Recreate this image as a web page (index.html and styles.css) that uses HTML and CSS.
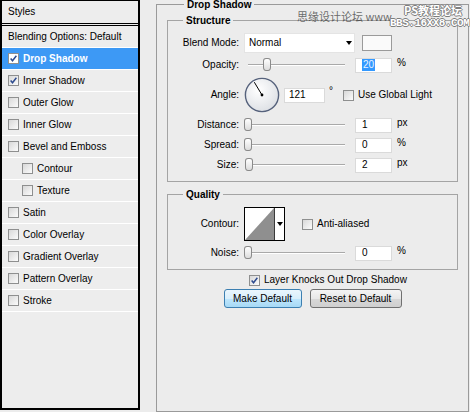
FILE: index.html
```html
<!DOCTYPE html>
<html lang="en">
  <head>
    <meta charset="utf-8" />
    <title>Layer Style - Drop Shadow</title>
    <link rel="stylesheet" href="styles.css">
  </head>

  <body>
    <!-- left column: list of layer effects -->
    <div class="styles-list">
      <div class="list-head">Styles</div>
      <div class="list-item">Blending Options: Default</div>
      <div class="list-item selected">
        <span class="cb on"><svg viewBox="0 0 11 11"><path d="M2 5.5 L4.3 8.3 L9 2.2" /></svg></span>Drop Shadow
      </div>
      <div class="list-item">
        <span class="cb on"><svg viewBox="0 0 11 11"><path d="M2 5.5 L4.3 8.3 L9 2.2" /></svg></span>Inner Shadow
      </div>
      <div class="list-item"><span class="cb"></span>Outer Glow</div>
      <div class="list-item"><span class="cb"></span>Inner Glow</div>
      <div class="list-item"><span class="cb"></span>Bevel and Emboss</div>
      <div class="list-item sub"><span class="cb"></span>Contour</div>
      <div class="list-item sub"><span class="cb"></span>Texture</div>
      <div class="list-item"><span class="cb"></span>Satin</div>
      <div class="list-item"><span class="cb"></span>Color Overlay</div>
      <div class="list-item"><span class="cb"></span>Gradient Overlay</div>
      <div class="list-item"><span class="cb"></span>Pattern Overlay</div>
      <div class="list-item"><span class="cb"></span>Stroke</div>
    </div>

    <fieldset class="panel">
      <legend>Drop Shadow</legend>

      <fieldset class="group structure">
        <legend>Structure</legend>

        <div class="field">
          <span class="label">Blend Mode:</span>
          <div class="control">
            <div class="select">Normal<span class="caret"></span></div>
            <div class="swatch"></div>
          </div>
        </div>

        <div class="field slim">
          <span class="label">Opacity:</span>
          <div class="control">
            <div class="slider"><span class="thumb" style="left: 20%"></span></div>
            <div class="num"><span class="sel">20</span></div>
            <span class="unit">%</span>
          </div>
        </div>

        <div class="field angle">
          <span class="label">Angle:</span>
          <div class="control">
            <svg class="dial" viewBox="0 0 36 36">
              <defs>
                <radialGradient id="dialfill" cx="40%" cy="35%" r="70%">
                  <stop offset="0" stop-color="#ffffff" />
                  <stop offset="1" stop-color="#dcdfe4" />
                </radialGradient>
              </defs>
              <circle cx="18" cy="18" r="16.6" fill="url(#dialfill)" stroke="#56627c" stroke-width="1.4" />
              <line x1="18" y1="18" x2="10.3" y2="5.2" stroke="#000" stroke-width="1" />
              <circle cx="18" cy="18" r="1.4" fill="#000" />
            </svg>
            <div class="num wide">121</div>
            <span class="deg">°</span>
            <span class="check global"><span class="cb"></span>Use Global Light</span>
          </div>
        </div>

        <div class="field slim">
          <span class="label">Distance:</span>
          <div class="control">
            <div class="slider"><span class="thumb" style="left: 0.4%"></span></div>
            <div class="num">1</div>
            <span class="unit">px</span>
          </div>
        </div>

        <div class="field slim">
          <span class="label">Spread:</span>
          <div class="control">
            <div class="slider"><span class="thumb" style="left: 0%"></span></div>
            <div class="num">0</div>
            <span class="unit">%</span>
          </div>
        </div>

        <div class="field slim">
          <span class="label">Size:</span>
          <div class="control">
            <div class="slider"><span class="thumb" style="left: 0.8%"></span></div>
            <div class="num">2</div>
            <span class="unit">px</span>
          </div>
        </div>
      </fieldset>

      <fieldset class="group quality">
        <legend>Quality</legend>

        <div class="field">
          <span class="label">Contour:</span>
          <div class="control">
            <div class="contour">
              <svg class="curve" viewBox="0 0 29 32" preserveAspectRatio="none">
                <polygon points="0,32 29,0 29,32" fill="#8f8f8f" />
              </svg>
              <span class="contour-arrow"><span class="caret"></span></span>
            </div>
            <span class="check anti"><span class="cb"></span>Anti-aliased</span>
          </div>
        </div>

        <div class="field slim">
          <span class="label">Noise:</span>
          <div class="control">
            <div class="slider"><span class="thumb" style="left: 0%"></span></div>
            <div class="num">0</div>
            <span class="unit">%</span>
          </div>
        </div>
      </fieldset>

      <div class="check knock">
        <span class="cb on"><svg viewBox="0 0 11 11"><path d="M2 5.5 L4.3 8.3 L9 2.2" /></svg></span>Layer Knocks Out Drop Shadow
      </div>

      <div class="buttons">
        <button class="btn default">Make Default</button>
        <button class="btn">Reset to Default</button>
      </div>
    </fieldset>

    <!-- forum watermark over the top right corner -->
    <div class="wm-site">思缘设计论坛 www.</div>
    <div class="wm-logo">
      <div class="wm-title">PS教程论坛</div>
      <div class="wm-url">BBS.16XX8.COM</div>
    </div>
  </body>
</html>
```

FILE: styles.css
```css
body {
  margin: 0;
  height: 412px;
  overflow: hidden;
  display: flex;
  position: relative;
  background: #ececec;
  font-family: "Liberation Sans", Arial, sans-serif;
  font-size: 10px;
  line-height: 12px;
  color: #000;
}

/* ---------- styles list ---------- */
.styles-list {
  box-sizing: border-box;
  width: 140px;
  height: 410px;
  margin-right: 16px;
  border: 2px solid #000;
  border-top-width: 1px;
  background: #ededed;
}
.list-head {
  height: 22px;
  padding-left: 6px;
  display: flex;
  align-items: center;
  border-bottom: 3px double #000;
}
.list-item {
  height: 21px;
  padding-left: 6px;
  display: flex;
  align-items: center;
  gap: 4px;
  border-bottom: 1px solid #fff;
}
.list-item.sub {
  padding-left: 20px;
}
.list-item.selected {
  background: #3d99f5;
  color: #fff;
  font-weight: bold;
}

.cb {
  box-sizing: border-box;
  width: 11px;
  height: 11px;
  flex: none;
  border: 1px solid #8e8f8f;
  background: linear-gradient(135deg, #d8d8d8, #fbfbfb);
  display: inline-flex;
}
.cb svg {
  width: 9px;
  height: 9px;
}
.cb path {
  fill: none;
  stroke: #2c4a8e;
  stroke-width: 1.8;
}
.selected .cb {
  background: #fff;
}

/* ---------- right panel ---------- */
.panel {
  box-sizing: border-box;
  width: 313px;
  height: 412px;
  margin: 0;
  padding: 7px 10px 0;
  min-inline-size: 0;
  border: 1px solid #9a9a9a;
}
legend {
  margin-left: 17px;
  padding: 0 3px;
  font-weight: bold;
  line-height: 9px;
}
.group {
  margin: 0;
  padding: 8px 0 8px;
  min-inline-size: 0;
  border: 1px solid #a4a4a4;
}
.group legend {
  margin-left: 15px;
}
.quality {
  margin-top: 8px;
}

.field {
  display: grid;
  grid-template-columns: 71px auto;
  column-gap: 5px;
  align-items: center;
  min-height: 20px;
}
.field + .field {
  margin-top: 4px;
}
.field.slim {
  min-height: 16px;
}
.label {
  text-align: right;
}
.control {
  display: flex;
  align-items: center;
}

.select {
  box-sizing: border-box;
  width: 111px;
  height: 20px;
  padding-left: 4px;
  display: flex;
  align-items: center;
  justify-content: space-between;
  background: #fff;
  border: 1px solid #e4e4e4;
}
.caret {
  width: 0;
  height: 0;
  margin-right: 2px;
  border-left: 3px solid transparent;
  border-right: 3px solid transparent;
  border-top: 4px solid #000;
}
.swatch {
  box-sizing: border-box;
  width: 30px;
  height: 16px;
  margin-left: 7px;
  background: #fafafa;
  border: 1px solid #9a9a9a;
}

.slider {
  position: relative;
  width: 97px;
  height: 16px;
  margin-left: 4px;
  margin-right: 10px;
}
.slider::before {
  content: "";
  position: absolute;
  left: 0;
  right: 0;
  top: 7px;
  height: 1px;
  background: #a9a9a9;
  border-bottom: 1px solid #fff;
}
.thumb {
  position: absolute;
  top: 1px;
  box-sizing: border-box;
  width: 8px;
  height: 13px;
  margin-left: -4px;
  border: 1px solid #8a8a8a;
  border-radius: 3px 3px 3px 3px / 3px 3px 4px 4px;
  background: linear-gradient(#ffffff, #dcdcdc);
}

.num {
  box-sizing: border-box;
  width: 37px;
  height: 15px;
  padding-left: 6px;
  display: flex;
  align-items: center;
  background: #fff;
  border: 1px solid #dadada;
}
.num.wide {
  width: 41px;
  margin-left: 4px;
  padding-left: 4px;
}
.sel {
  padding: 0 1px;
  background: #3399ff;
  color: #eaf4ff;
}
.unit {
  margin-left: 5px;
  align-self: flex-start;
}

.angle {
  min-height: 36px;
}
.dial {
  width: 36px;
  height: 36px;
}
.deg {
  margin-left: 4px;
  margin-top: -8px;
}

.check {
  display: flex;
  align-items: center;
  gap: 4px;
}
.global {
  margin-left: 10px;
}
.anti {
  margin-left: 17px;
}

.contour {
  box-sizing: border-box;
  width: 41px;
  height: 34px;
  display: flex;
  border: 1px solid #000;
  background: #fff;
}
.curve {
  width: 29px;
  height: 32px;
  border-right: 1px solid #3a3a3a;
}
.contour-arrow {
  flex: 1;
  display: flex;
  align-items: center;
  justify-content: center;
}
.contour-arrow .caret {
  margin-right: 0;
}

.knock {
  margin-top: 4px;
  padding-left: 82px;
  height: 12px;
}

.buttons {
  margin-top: 3px;
  display: flex;
  justify-content: center;
  gap: 8px;
}
.btn {
  box-sizing: border-box;
  width: 92px;
  height: 19px;
  padding: 0;
  font-family: inherit;
  font-size: 10px;
  color: #000;
  border: 1px solid #707070;
  border-radius: 3px;
  background: linear-gradient(#f4f4f4 0%, #e8e8e8 50%, #d8d8d8 51%, #cfcfcf 100%);
}
.btn.default {
  width: 78px;
  border-color: #3c7fb1;
  background: linear-gradient(#eaf6fd 0%, #d9effc 50%, #bee6fd 51%, #a7d9f5 100%);
}

/* ---------- watermark ---------- */
.wm-site {
  position: absolute;
  left: 297px;
  top: 9px;
  font-family: "Noto Sans CJK SC", sans-serif;
  font-size: 11px;
  line-height: 14px;
  color: rgba(60, 60, 60, 0.75);
  white-space: nowrap;
}
.wm-logo {
  position: absolute;
  left: 390px;
  top: 3px;
  width: 76px;
  text-align: center;
  color: #fff;
  font-weight: bold;
  text-shadow: 1px 0 0 #7d7d7d, -1px 0 0 #7d7d7d, 0 1px 0 #7d7d7d, 0 -1px 0 #7d7d7d;
}
.wm-title {
  font-family: "Noto Sans CJK SC", sans-serif;
  font-size: 11px;
  line-height: 15px;
  padding-left: 10px;
}
.wm-url {
  font-family: "Liberation Mono", monospace;
  font-size: 11px;
  line-height: 10px;
  letter-spacing: -0.5px;
}
```
